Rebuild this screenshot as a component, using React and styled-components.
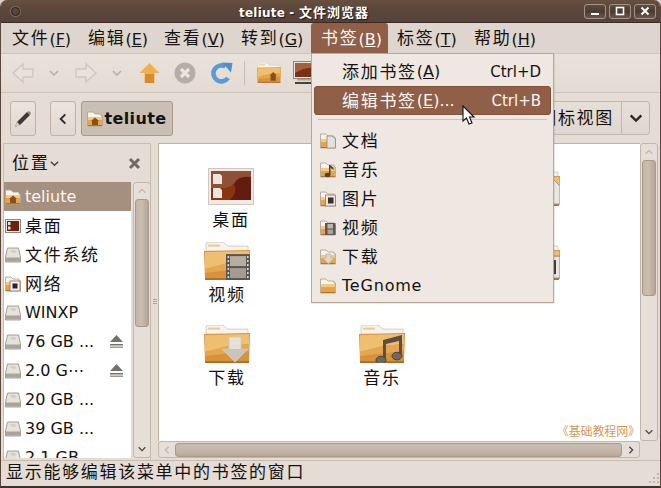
import React from 'react';
import styled, { createGlobalStyle } from 'styled-components';

const GlobalStyle = createGlobalStyle`
    html, body {
        margin: 0;
        padding: 0;
        background: #d8d3ce;
    }
    body {
        font-family: "DejaVu Sans", "Noto Sans CJK SC", sans-serif;
        font-size: 16px;
        color: #141210;
    }
    u {
        text-underline-offset: 1px;
    }
`;

const Window = styled.div`
    position: relative;
    width: 661px;
    height: 488px;
    box-sizing: border-box;
    border-left: 1px solid #5a463a;
    border-right: 1px solid #5a463a;
    border-bottom: 2px solid #3f3128;
    border-radius: 7px 7px 0 0;
    background: #e4dcd5;
    overflow: hidden;
    display: flex;
    flex-direction: column;
`;

const Zh = styled.span`
    font-size: 17px;
    letter-spacing: 1.7px;
    line-height: 0;
    vertical-align: 1px;
`;

/* title bar */
const TitleBar = styled.div`
    height: 23px;
    flex: none;
    display: flex;
    align-items: center;
    padding: 0 4px 0 10px;
    background: linear-gradient(#67503f 0, #5c473b 40%, #56423a 100%);
    border-bottom: 1px solid #3a2c24;
    box-sizing: border-box;
`;

const TitleDot = styled.span`
    width: 7px;
    height: 7px;
    border: 1px solid #2f241e;
    box-shadow: 0 0 0 1px #7b6a5e;
    border-radius: 50%;
`;

const TitleText = styled.div`
    flex: 1;
    text-align: center;
    padding-left: 4px;
    color: #fff;
    font-size: 12px;
    font-weight: bold;
    letter-spacing: 0.2px;
    text-shadow: 1px 1px 1px #1d1511;
    span {
        font-size: 13px;
        letter-spacing: 1px;
    }
`;

const WindowButtons = styled.div`
    display: flex;
    gap: 3px;
`;

const WindowButton = styled.div`
    width: 22px;
    height: 15px;
    box-sizing: border-box;
    border: 1px solid #a39488;
    border-radius: 3px;
    background: linear-gradient(#5f4b3f 0, #4d3b31 50%, #6a574b 100%);
    display: flex;
    align-items: center;
    justify-content: center;
`;

/* menu bar */
const MenuBar = styled.div`
    height: 31px;
    flex: none;
    display: flex;
    align-items: flex-end;
    padding-left: 2px;
    background: #ded6ce;
    border-bottom: 1px solid #cfc5bb;
    box-sizing: border-box;
`;

const MenuTitle = styled.div`
    height: 30px;
    line-height: 34px;
    padding: 0 0 0 ${p => (p.$open ? 10 : 9)}px;
    width: ${p => p.$w}px;
    box-sizing: border-box;
    white-space: nowrap;
    border-radius: 3px 3px 0 0;
    background: ${p => (p.$open ? '#8f5f47' : 'transparent')};
    color: ${p => (p.$open ? '#fbf6f1' : 'inherit')};
`;

/* toolbar */
const ToolBar = styled.div`
    height: 39px;
    flex: none;
    display: flex;
    align-items: center;
    padding-left: 11px;
    background: linear-gradient(#e9e2db, #e3dbd3);
    border-bottom: 1px solid #cfc4b9;
    box-sizing: border-box;
`;

const ToolIcon = styled.div`
    display: flex;
    flex: none;
    margin-left: ${p => p.$gap || 0}px;
`;

const ToolSeparator = styled.div`
    width: 1px;
    height: 24px;
    flex: none;
    margin-left: ${p => p.$gap}px;
    background: #c9bdb1;
`;

/* path bar */
const PathBar = styled.div`
    height: 50px;
    flex: none;
    display: flex;
    align-items: flex-start;
    padding: 8px 10px 0 9px;
    box-sizing: border-box;
    background: #e4dcd5;
`;

const PathButton = styled.div`
    height: 35px;
    box-sizing: border-box;
    display: flex;
    align-items: center;
    justify-content: center;
    flex: none;
    width: ${p => p.$w}px;
    margin-left: ${p => p.$gap || 0}px;
    border: 1px solid ${p => (p.$active ? '#a99a8c' : '#bfb1a4')};
    border-radius: 3px;
    background: ${p => (p.$active ? '#c9bfb4' : 'linear-gradient(#ebe4dd, #e0d8d0)')};
`;

const CrumbText = styled.span`
    font-weight: bold;
    letter-spacing: 0.4px;
    margin-left: 1px;
`;

const ViewSwitch = styled.div`
    margin-left: auto;
    height: 34px;
    width: 240px;
    box-sizing: border-box;
    display: flex;
    align-items: center;
    justify-content: flex-end;
    border: 1px solid #c4b7aa;
    border-radius: 3px;
    background: linear-gradient(#e6dfd8, #dfd7cf);
`;

const ViewArrow = styled.div`
    width: 27px;
    height: 100%;
    margin-left: 7px;
    border-left: 1px solid #c4b7aa;
    display: flex;
    align-items: center;
    justify-content: center;
`;

/* body */
const Body = styled.div`
    flex: 1;
    min-height: 0;
    display: flex;
    padding: 0 2px 0 2px;
`;

const Side = styled.div`
    width: 148px;
    flex: none;
    display: flex;
    flex-direction: column;
    box-sizing: border-box;
    border: 1px solid #c9bdb1;
    border-bottom: none;
`;

const SideHeader = styled.div`
    height: 38px;
    flex: none;
    display: flex;
    align-items: center;
    padding: 0 9px 0 8px;
    box-sizing: border-box;
`;

const CloseMark = styled.div`
    margin-left: auto;
    display: flex;
`;

const SideBody = styled.div`
    flex: 1;
    min-height: 0;
    display: flex;
    gap: 2px;
    padding-bottom: 2px;
`;

const PlaceList = styled.div`
    width: 127px;
    flex: none;
    background: #fff;
    overflow: hidden;
`;

const PlaceRow = styled.div`
    height: 29px;
    display: flex;
    align-items: center;
    padding-left: 1px;
    background: ${p => (p.$selected ? '#a58f7e' : 'transparent')};
    color: ${p => (p.$selected ? '#fbf6f1' : 'inherit')};
`;

const PlaceLabel = styled.span`
    margin-left: 4px;
    padding-top: ${p => (p.$zh ? 4 : 0)}px;
    white-space: nowrap;
`;

const EjectSlot = styled.div`
    margin-left: auto;
    margin-right: 7px;
    display: flex;
`;

const Handle = styled.div`
    width: 7px;
    flex: none;
    display: flex;
    flex-direction: column;
    justify-content: center;
    gap: 1px;
    align-items: center;
    i {
        width: 4px;
        height: 1px;
        background: #b0a295;
    }
`;

const MainColumn = styled.div`
    flex: 1;
    min-width: 0;
    display: flex;
    flex-direction: column;
    padding-bottom: 2px;
`;

const MainRow = styled.div`
    flex: 1;
    min-height: 0;
    display: flex;
`;

const IconPane = styled.div`
    position: relative;
    flex: 1;
    background: #fff;
    border-top: 1px solid #bfb1a4;
    border-left: 1px solid #bfb1a4;
    box-sizing: border-box;
    display: grid;
    grid-template-columns: repeat(3, 92px);
    grid-template-rows: 74px 83px 83px;
    column-gap: 63px;
    padding: 24px 0 0 22px;
`;

const FileItem = styled.div`
    display: flex;
    flex-direction: column;
    align-items: center;
    margin-left: ${p => (p.$shift ? 8 : 0)}px;
`;

const FileLabel = styled(Zh)`
    margin-top: 4px;
    line-height: 22px;
`;

const Watermark = styled.div`
    position: absolute;
    right: 0;
    bottom: 0;
    font-size: 12px;
    color: #d39a5c;
    line-height: 17px;
    letter-spacing: -0.1px;
`;

const ScrollTrack = styled.div`
    display: flex;
    flex: ${p => (p.$horizontal ? 1 : 'none')};
    position: relative;
    box-sizing: border-box;
    border: 1px solid #c4b7aa;
    border-radius: 3px;
    background: #e6dfd8;
    flex-direction: ${p => (p.$horizontal ? 'row' : 'column')};
    align-items: center;
    width: ${p => (p.$horizontal ? 'auto' : '18px')};
    height: ${p => (p.$horizontal ? '17px' : 'auto')};
`;

const ScrollArrow = styled.div`
    flex: none;
    display: flex;
    align-items: center;
    justify-content: center;
    width: ${p => (p.$horizontal ? '16px' : '100%')};
    height: ${p => (p.$horizontal ? '100%' : '16px')};
`;

const ScrollThumb = styled.div`
    box-sizing: border-box;
    border: 1px solid #a99a8c;
    border-radius: 3px;
    ${p => (p.$horizontal
        ? `height: 14px; width: ${p.$size}px; background: linear-gradient(#c9bdb1, #c2b5a8 60%, #b5a597);`
        : `width: 14px; height: ${p.$size}px; background: linear-gradient(90deg, #c2b5a8, #c9bdb1 45%, #b5a597);`)}
`;

const ScrollGap = styled.div`
    flex: 1;
`;

const HScrollRow = styled.div`
    display: flex;
    margin-right: 18px;
    flex: none;
`;

const StatusBar = styled.div`
    height: 26px;
    flex: none;
    position: relative;
    display: flex;
    align-items: center;
    padding: 0 0 3px 5px;
    background: #e4dcd5;
    border-top: 1px solid #c9bdb1;
    box-sizing: border-box;
    white-space: nowrap;
`;

const Grip = styled.svg`
    position: absolute;
    right: 1px;
    bottom: 1px;
`;

/* open bookmarks menu */
const DropMenu = styled.div`
    position: absolute;
    left: 310px;
    top: 53px;
    width: 243px;
    box-sizing: border-box;
    padding: 3px 2px 2px;
    background: #efe8e2;
    border: 1px solid #b9a797;
    box-shadow: 1px 1px 0 rgba(90, 70, 55, 0.12);
`;

const DropRow = styled.div`
    height: 29px;
    display: flex;
    align-items: center;
    box-sizing: border-box;
    padding: 0 9px 0 ${p => (p.$plain ? 27 : 5)}px;
    border-radius: 3px;
    background: ${p => (p.$hot ? '#8f5f47' : 'transparent')};
    color: ${p => (p.$hot ? '#fbf6f1' : 'inherit')};
    border: 1px solid ${p => (p.$hot ? '#7c5039' : 'transparent')};
`;

const DropLabel = styled.span`
    margin-left: 6px;
    padding-top: ${p => (p.$zh ? 4 : 0)}px;
    letter-spacing: 0.8px;
    white-space: nowrap;
`;

const Shortcut = styled.span`
    margin-left: auto;
    font-size: 15px;
`;

const DropSeparator = styled.div`
    height: 1px;
    margin: 4px 4px 6px;
    background: #cfc3b8;
`;

const Pointer = styled.svg`
    position: absolute;
    left: 461px;
    top: 105px;
`;

/* drawings */
const Chevron = ({ dir = 'down', size = 12, color = '#6e655d', width = 1.6 }) => {
    const points = {
        down: '2,4 6,8 10,4',
        up: '2,8 6,4 10,8',
        left: '8,2 4,6 8,10',
        right: '4,2 8,6 4,10',
    }[dir];
    return (
        <svg width={size} height={size} viewBox="0 0 12 12">
            <polyline points={points} fill="none" stroke={color} strokeWidth={width} />
        </svg>
    );
};

const Emblem = ({ kind }) => {
    if (kind === 'film') {
        return (
            <g>
                <rect x="22" y="12" width="24" height="26" fill="#5a5350" />
                <rect x="26" y="14" width="16" height="10" fill="#b5aea4" />
                <rect x="26" y="26" width="16" height="10" fill="#a39c92" />
                {[14, 18, 22, 26, 30, 34].map(y => (
                    <g key={y}>
                        <rect x="23.5" y={y} width="1.6" height="2" fill="#ddd" />
                        <rect x="43" y={y} width="1.6" height="2" fill="#ddd" />
                    </g>
                ))}
            </g>
        );
    }
    if (kind === 'download') {
        return (
            <g>
                <polygon points="25,12 37,12 37,24 44,24 31,37 18,24 25,24" fill="#e6e0d9" stroke="#cdc6bd" strokeWidth="0.8" />
                <polygon points="25,24 37,24 44,24 31,37 18,24" fill="#c9c3ba" />
            </g>
        );
    }
    if (kind === 'music') {
        return (
            <g fill="#5c4f48">
                <path d="M24 15 L43 10 L43 31 L40 31 L40 16 L27 19 L27 35 L24 35 Z" />
                <ellipse cx="22" cy="35" rx="5" ry="3.8" fill="#6e6762" stroke="#4c423c" />
                <ellipse cx="38" cy="31" rx="5" ry="3.8" fill="#6e6762" stroke="#4c423c" />
            </g>
        );
    }
    if (kind === 'doc') {
        return <polygon points="28,12 40,12 46,18 46,36 28,36" fill="#e9e6e1" stroke="#9c958c" />;
    }
    if (kind === 'picture') {
        return (
            <g>
                <rect x="26" y="14" width="20" height="22" fill="#e9e6e1" stroke="#8c857c" />
                <rect x="30" y="18" width="12" height="14" fill="#4a3a30" />
            </g>
        );
    }
    if (kind === 'home') {
        return <polygon points="24,24 31,17 38,24 36,24 36,34 26,34 26,24" fill="#8c4f16" />;
    }
    return null;
};

const Folder = ({ size = 46, kind }) => (
    <svg width={size} height={size * 0.83} viewBox="0 0 46 38">
        <path d="M2 9 L2 2 Q2 0 4 0 L19 0 L24 4 L44 4 L44 10 Z" fill="#f6f3ee" stroke="#cfc7bd" strokeWidth="0.8" />
        <rect x="4" y="2.5" width="12" height="2" fill="#eec98a" />
        <path d="M0 9 L46 8 L45 36 Q45 38 43 38 L3 38 Q1 38 1 36 Z" fill="#d8923c" />
        <path d="M1 10 L45 9 L45 19 L24 21 L1 27 Z" fill="#eebf70" />
        <path d="M1 27 L24 21 L45 19 L45 26 L1 31 Z" fill="#e3a751" />
        <rect x="1" y="36" width="44" height="2" fill="#b06f26" />
        <Emblem kind={kind} />
    </svg>
);

const SmallFolder = ({ kind }) => (
    <svg width="16" height="16" viewBox="0 0 16 16">
        <path d="M0.5 15 L0.5 1 L6 1 L8 3 L14 3 L14 5 L15.5 5 L15.5 15 Z" fill="#f7f2ea" stroke="#a89d90" strokeWidth="0.8" />
        <rect x="1" y="6" width="14" height="9" fill="#e6a448" />
        <rect x="1" y="6" width="14" height="3" fill="#f1cb85" />
        <rect x="1" y="14" width="14" height="1" fill="#b47427" />
        {kind === 'home' && <polygon points="4,10 8,6.5 12,10 11,10 11,14 5,14 5,10" fill="#8c4f16" />}
        {kind === 'net' && (
            <g>
                <rect x="5" y="5" width="10" height="10" fill="#f4f0eb" stroke="#7d756c" strokeWidth="0.8" />
                <rect x="7.5" y="7.5" width="5" height="5" fill="#2b2522" />
            </g>
        )}
        {kind === 'doc' && <polygon points="7,3 12,3 15.5,6 15.5,15 7,15" fill="#e5e1dc" stroke="#8f887f" strokeWidth="0.8" />}
        {kind === 'music' && (
            <g fill="#4d423c">
                <rect x="9" y="3" width="1.5" height="10" />
                <polygon points="10,3 13.5,5.5 13.5,8 10,5.5" />
                <ellipse cx="7.5" cy="13" rx="2.8" ry="2.2" />
            </g>
        )}
        {kind === 'picture' && (
            <g>
                <rect x="5.5" y="4" width="10" height="11" fill="#ece8e3" stroke="#857e75" strokeWidth="0.8" />
                <rect x="8" y="6.5" width="5.5" height="6" fill="#3d2f28" />
            </g>
        )}
        {kind === 'film' && (
            <g>
                <rect x="5" y="3" width="10.5" height="12" fill="#5d5653" />
                <rect x="7.5" y="4" width="5.5" height="4.5" fill="#bdb6ad" />
                <rect x="7.5" y="9.5" width="5.5" height="4.5" fill="#a9a298" />
            </g>
        )}
        {kind === 'download' && <polygon points="6,5 11,5 11,9 14,9 8.5,15 3,9 6,9" fill="#dcd6cf" stroke="#b0a99f" strokeWidth="0.6" />}
    </svg>
);

const DesktopArt = () => (
    <svg width="46" height="37" viewBox="0 0 46 37">
        <rect x="0.5" y="0.5" width="45" height="36" fill="#f0ebe5" stroke="#cfc6bc" />
        <rect x="3" y="3" width="40" height="29" fill="#641c0e" />
        <path d="M3 3 H43 V9 Q30 7 26 16 Q20 22 3 20 Z" fill="#8f5135" />
        <path d="M3 20 Q20 22 26 16 Q30 24 22 32 H3 Z" fill="#8a3511" />
        <polygon points="5,6 12,6 14,8 14,16 5,16" fill="#ece6df" />
        <polygon points="5,20 12,20 14,22 14,30 5,30" fill="#ece6df" />
    </svg>
);

const SmallDesktop = () => (
    <svg width="16" height="16" viewBox="0 0 16 16">
        <rect x="0.5" y="1.5" width="15" height="13" fill="#f0ebe5" stroke="#8d857b" />
        <rect x="2" y="3" width="12" height="10" fill="#6a2110" />
        <rect x="3" y="4" width="2.5" height="3" fill="#e8e2da" />
        <rect x="3" y="8.5" width="2.5" height="3" fill="#e8e2da" />
    </svg>
);

const Drive = () => (
    <svg width="16" height="16" viewBox="0 0 16 16">
        <path d="M2.5 1 H13.5 L15.5 10 V15 H0.5 V10 Z" fill="#e6e2dc" stroke="#8f8981" strokeWidth="0.8" />
        <path d="M4.5 4 Q8 2 11.5 4 Q10 8 4.5 4 Z" fill="#d2cdc6" />
        <rect x="1" y="10.5" width="14" height="4" fill="#aaa49b" />
    </svg>
);

const Eject = () => (
    <svg width="15" height="15" viewBox="0 0 15 15">
        <polygon points="7.5,1 14,8 1,8" fill="#77706a" />
        <rect x="1" y="10" width="13" height="1.5" fill="#77706a" />
        <rect x="1" y="12.5" width="13" height="1.5" fill="#a09890" />
    </svg>
);

const HollowArrow = ({ flip }) => (
    <svg width="22" height="22" viewBox="0 0 22 22" style={flip ? { transform: 'scaleX(-1)' } : undefined}>
        <polygon points="1,11 11,2 11,7 21,7 21,15 11,15 11,20" fill="#e8e2db" stroke="#cfc7be" strokeWidth="1.4" />
    </svg>
);

const HomeArrow = () => (
    <svg width="21" height="22" viewBox="0 0 21 22">
        <polygon points="10.5,1 20.5,11 15.5,11 15.5,21 5.5,21 5.5,11 0.5,11" fill="#eeb050" />
        <rect x="6" y="12" width="9" height="9" fill="#d98b2b" />
    </svg>
);

const StopSign = () => (
    <svg width="22" height="22" viewBox="0 0 22 22">
        <circle cx="11" cy="11" r="10.5" fill="#b5aea7" />
        <path d="M7 7 L15 15 M15 7 L7 15" stroke="#e9e5e0" strokeWidth="3.2" />
    </svg>
);

const Reload = () => (
    <svg width="22" height="22" viewBox="0 0 22 22">
        <path d="M17 16 A8 8 0 1 1 14.5 4.5" fill="none" stroke="#5b9bd5" strokeWidth="4.6" />
        <polygon points="11,0.5 21.5,1 20,10.5" fill="#4f90cc" />
    </svg>
);

const Computer = () => (
    <svg width="24" height="24" viewBox="0 0 24 24">
        <rect x="0.5" y="0.5" width="23" height="17" fill="#e8e4df" stroke="#8c857c" />
        <rect x="2" y="2" width="20" height="14" fill="#7a3012" />
        <path d="M2 2 H22 V7 Q12 6 2 12 Z" fill="#a3603a" />
        <rect x="4" y="18" width="16" height="1.5" fill="#a8a299" />
        <rect x="2" y="21" width="20" height="2" fill="#47413d" />
    </svg>
);

const Pencil = () => (
    <svg width="18" height="18" viewBox="0 0 18 18">
        <polygon points="1,17 3,12 13,2 16,5 6,15" fill="#3e3935" />
        <polygon points="13,2 16,5 17,3 15,1" fill="#8e8780" />
        <polygon points="1,17 3,12 6,15" fill="#e5d3a8" />
    </svg>
);

const places = [
    { name: 'teliute', icon: <SmallFolder kind="home" />, selected: true },
    { name: '桌面', icon: <SmallDesktop />, zh: true },
    { name: '文件系统', icon: <Drive />, zh: true },
    { name: '网络', icon: <SmallFolder kind="net" />, zh: true },
    { name: 'WINXP', icon: <Drive /> },
    { name: '76 GB ...', icon: <Drive />, eject: true },
    { name: '2.0 G⋯', icon: <Drive />, eject: true },
    { name: '20 GB ...', icon: <Drive /> },
    { name: '39 GB ...', icon: <Drive /> },
    { name: '2.1 GB', icon: <Drive /> },
];

const files = [
    { art: <DesktopArt />, label: '桌面', shift: true },
    null,
    { art: <Folder kind="doc" /> },
    { art: <Folder kind="film" />, label: '视频' },
    null,
    { art: <Folder kind="picture" /> },
    { art: <Folder kind="download" />, label: '下载' },
    { art: <Folder kind="music" />, label: '音乐' },
];

const bookmarks = [
    { name: '文档', kind: 'doc', zh: true },
    { name: '音乐', kind: 'music', zh: true },
    { name: '图片', kind: 'picture', zh: true },
    { name: '视频', kind: 'film', zh: true },
    { name: '下载', kind: 'download', zh: true },
    { name: 'TeGnome' },
];

const menus = [
    ['文件', 'F', 76],
    ['编辑', 'E', 76],
    ['查看', 'V', 77],
    ['转到', 'G', 79],
    ['书签', 'B', 77],
    ['标签', 'T', 77],
    ['帮助', 'H', 77],
];

const App = () => (
    <>
        <GlobalStyle />
        <Window>
            <TitleBar>
                <TitleDot />
                <TitleText>teliute - <span>文件浏览器</span></TitleText>
                <WindowButtons>
                    <WindowButton>
                        <svg width="10" height="10" viewBox="0 0 10 10"><rect x="1" y="7" width="8" height="2" fill="#fff" /></svg>
                    </WindowButton>
                    <WindowButton>
                        <svg width="10" height="10" viewBox="0 0 10 10"><rect x="1.5" y="1.5" width="7" height="7" fill="none" stroke="#fff" strokeWidth="1.6" /></svg>
                    </WindowButton>
                    <WindowButton>
                        <svg width="10" height="10" viewBox="0 0 10 10"><path d="M1.5 1.5 L8.5 8.5 M8.5 1.5 L1.5 8.5" stroke="#fff" strokeWidth="2" /></svg>
                    </WindowButton>
                </WindowButtons>
            </TitleBar>

            <MenuBar>
                {menus.map(([name, key, w]) => (
                    <MenuTitle key={key} $open={key === 'B'} $w={w}>
                        <Zh>{name}</Zh>(<u>{key}</u>)
                    </MenuTitle>
                ))}
            </MenuBar>

            <ToolBar>
                <ToolIcon><HollowArrow /></ToolIcon>
                <ToolIcon $gap={14}><Chevron color="#b9b0a7" /></ToolIcon>
                <ToolIcon $gap={15}><HollowArrow flip /></ToolIcon>
                <ToolIcon $gap={14}><Chevron color="#b9b0a7" /></ToolIcon>
                <ToolIcon $gap={16}><HomeArrow /></ToolIcon>
                <ToolIcon $gap={14}><StopSign /></ToolIcon>
                <ToolIcon $gap={15}><Reload /></ToolIcon>
                <ToolSeparator $gap={11} />
                <ToolIcon $gap={12}><Folder size={24} kind="home" /></ToolIcon>
                <ToolIcon $gap={12}><Computer /></ToolIcon>
            </ToolBar>

            <PathBar>
                <PathButton $w={26}><Pencil /></PathButton>
                <PathButton $w={26} $gap={14}><Chevron dir="left" color="#2f2a26" size={14} /></PathButton>
                <PathButton $w={92} $gap={5} $active>
                    <SmallFolder kind="home" />
                    <CrumbText>teliute</CrumbText>
                </PathButton>
                <ViewSwitch>
                    <Zh>图标视图</Zh>
                    <ViewArrow><Chevron color="#2f2a26" size={16} width={1.8} /></ViewArrow>
                </ViewSwitch>
            </PathBar>

            <Body>
                <Side>
                    <SideHeader>
                        <Zh>位置</Zh>
                        <Chevron color="#4a433d" size={11} />
                        <CloseMark>
                            <svg width="13" height="13" viewBox="0 0 13 13">
                                <path d="M2 2 L11 11 M11 2 L2 11" stroke="#6f6760" strokeWidth="3" />
                            </svg>
                        </CloseMark>
                    </SideHeader>
                    <SideBody>
                        <PlaceList>
                            {places.map(place => (
                                <PlaceRow key={place.name} $selected={place.selected}>
                                    {place.icon}
                                    <PlaceLabel $zh={place.zh}>{place.zh ? <Zh>{place.name}</Zh> : place.name}</PlaceLabel>
                                    {place.eject && <EjectSlot><Eject /></EjectSlot>}
                                </PlaceRow>
                            ))}
                        </PlaceList>
                        <ScrollTrack>
                            <ScrollArrow><Chevron dir="up" size={10} color="#c2b7ac" /></ScrollArrow>
                            <ScrollThumb $size={128} />
                            <ScrollGap />
                            <ScrollArrow><Chevron size={10} color="#4f4842" /></ScrollArrow>
                        </ScrollTrack>
                    </SideBody>
                </Side>

                <Handle><i /><i /><i /></Handle>

                <MainColumn>
                    <MainRow>
                        <IconPane>
                            {files.map((file, i) => (
                                file ? (
                                    <FileItem key={i} $shift={file.shift}>
                                        {file.art}
                                        {file.label && <FileLabel>{file.label}</FileLabel>}
                                    </FileItem>
                                ) : <div key={i} />
                            ))}
                            <Watermark>《基础教程网》</Watermark>
                        </IconPane>
                        <ScrollTrack>
                            <ScrollArrow><Chevron dir="up" size={10} color="#c2b7ac" /></ScrollArrow>
                            <ScrollThumb $size={136} />
                            <ScrollGap />
                            <ScrollArrow><Chevron size={10} color="#4f4842" /></ScrollArrow>
                        </ScrollTrack>
                    </MainRow>
                    <HScrollRow>
                        <ScrollTrack $horizontal>
                            <ScrollArrow $horizontal><Chevron dir="left" size={10} color="#c2b7ac" /></ScrollArrow>
                            <ScrollThumb $horizontal $size={447} />
                            <ScrollGap />
                            <ScrollArrow $horizontal><Chevron dir="right" size={10} color="#4f4842" /></ScrollArrow>
                        </ScrollTrack>
                    </HScrollRow>
                </MainColumn>
            </Body>

            <StatusBar>
                <Zh>显示能够编辑该菜单中的书签的窗口</Zh>
                <Grip width="14" height="14" viewBox="0 0 14 14">
                    {[[12, 2], [12, 6], [8, 6], [12, 10], [8, 10], [4, 10]].map(([x, y]) => (
                        <rect key={`${x}-${y}`} x={x} y={y} width="2" height="2" fill="#c2b7ac" />
                    ))}
                </Grip>
            </StatusBar>

            <DropMenu>
                <DropRow $plain>
                    <Zh>添加书签</Zh>(<u>A</u>)
                    <Shortcut>Ctrl+D</Shortcut>
                </DropRow>
                <DropRow $plain $hot>
                    <Zh>编辑书签</Zh>(<u>E</u>)...
                    <Shortcut>Ctrl+B</Shortcut>
                </DropRow>
                <DropSeparator />
                {bookmarks.map(item => (
                    <DropRow key={item.name}>
                        <SmallFolder kind={item.kind} />
                        <DropLabel $zh={item.zh}>{item.zh ? <Zh>{item.name}</Zh> : item.name}</DropLabel>
                    </DropRow>
                ))}
            </DropMenu>

            <Pointer width="14" height="22" viewBox="0 0 14 22">
                <path d="M1 1 L1 16 L4.5 13 L7 19 L10 18 L7.5 12 L12 12 Z" fill="#fff" stroke="#111" strokeWidth="1.1" />
            </Pointer>
        </Window>
    </>
);

export default App;
